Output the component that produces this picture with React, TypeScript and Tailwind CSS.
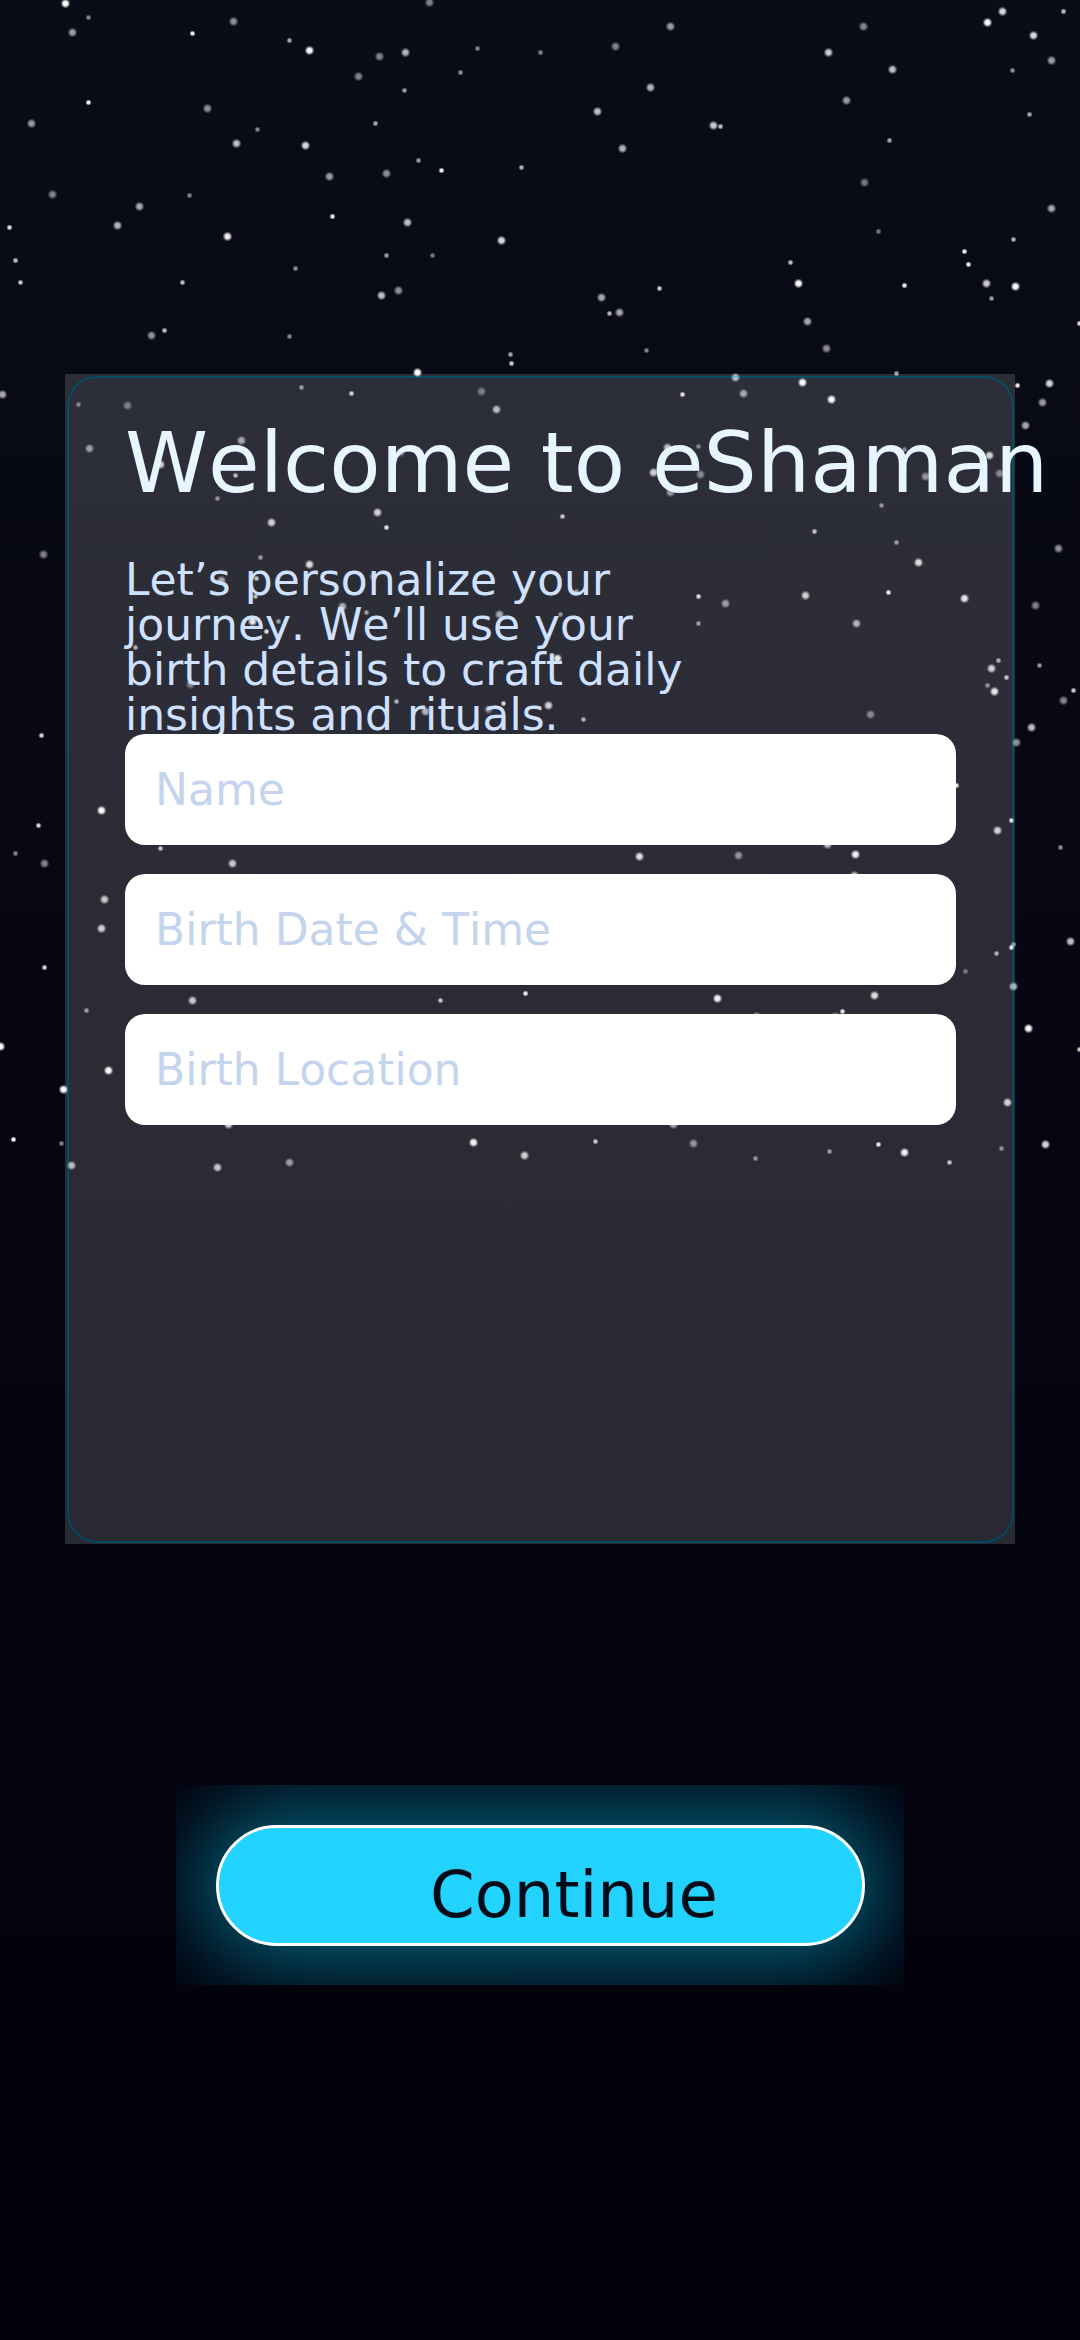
import React from "react";

type Star = [x: number, y: number, opacity: number];

const LARGE_STARS: Star[] = [
  [65, 3, 1], [72, 32, 0.6], [233, 21, 0.55], [309, 50, 1], [429, 2, 0.5], [405, 52, 0.7], [379, 56, 0.5],
  [358, 76, 0.5], [207, 108, 0.55], [31, 123, 0.6], [236, 143, 0.75], [305, 145, 0.85], [329, 176, 0.6],
  [386, 173, 0.55], [52, 194, 0.5], [139, 206, 0.65], [117, 225, 0.7], [227, 236, 0.95], [407, 222, 0.75],
  [501, 240, 0.85], [381, 295, 0.75], [398, 290, 0.55], [151, 335, 0.55], [417, 372, 1],
  [670, 26, 0.6], [615, 46, 0.5], [650, 87, 0.7], [597, 111, 0.75], [713, 125, 0.8], [622, 148, 0.7],
  [863, 26, 0.5], [828, 52, 0.8], [892, 69, 0.75], [846, 100, 0.6], [864, 182, 0.45], [1002, 11, 0.85],
  [987, 22, 1], [1033, 35, 0.85], [1051, 60, 0.6], [1051, 208, 0.65], [986, 283, 0.8], [1015, 286, 1],
  [798, 283, 1], [601, 297, 0.65], [619, 312, 0.65], [807, 321, 0.65], [826, 348, 0.55],
  [2, 394, 0.65], [481, 391, 0.4], [496, 409, 0.7], [127, 405, 0.4], [89, 448, 0.55], [241, 440, 0.6],
  [160, 464, 0.8], [400, 452, 0.4], [377, 512, 0.8], [271, 522, 0.8], [43, 554, 0.5], [309, 564, 0.85],
  [221, 580, 0.6], [373, 576, 0.35], [342, 606, 0.65], [252, 621, 0.9], [499, 614, 0.6], [190, 684, 0.4],
  [425, 711, 0.65], [488, 709, 0.4],
  [735, 377, 0.7], [743, 393, 0.6], [802, 382, 1], [831, 399, 1], [1049, 383, 0.85], [1042, 402, 0.6],
  [1025, 425, 0.65], [667, 447, 0.7], [653, 472, 0.8], [700, 474, 0.45], [670, 492, 0.5], [925, 476, 0.5],
  [989, 455, 0.8], [999, 473, 0.45], [918, 562, 0.85], [1058, 548, 0.55], [805, 595, 0.8], [964, 598, 0.9],
  [1035, 605, 0.5], [725, 603, 0.55], [856, 623, 0.65], [557, 658, 0.9], [548, 705, 0.8], [870, 714, 0.45],
  [991, 668, 0.8], [994, 691, 0.9], [1063, 700, 0.5], [1031, 727, 0.75], [1016, 742, 0.55],
  [101, 810, 1], [44, 863, 0.5], [232, 863, 0.75], [104, 899, 0.75], [101, 928, 0.8], [192, 1000, 0.75],
  [0, 1046, 1], [108, 1070, 1], [63, 1089, 1], [71, 1165, 0.7], [217, 1167, 0.75], [289, 1162, 0.55],
  [228, 1124, 0.8], [473, 1142, 0.95], [524, 1155, 0.8],
  [639, 856, 0.85], [738, 855, 0.5], [827, 844, 0.7], [855, 854, 0.95], [854, 875, 0.7], [997, 830, 0.8],
  [1070, 941, 0.75], [1013, 986, 0.7], [717, 998, 0.95], [874, 995, 0.85], [756, 1016, 0.6], [835, 1016, 0.5],
  [1028, 1028, 1], [1007, 1102, 0.8], [1045, 1144, 0.85], [904, 1152, 0.95], [693, 1143, 0.5], [673, 1124, 0.6],
];

const SMALL_STARS: Star[] = [
  [88, 17, 0.5], [192, 33, 0.95], [289, 40, 0.65], [477, 48, 0.5], [460, 72, 0.55], [404, 90, 0.6],
  [88, 102, 1], [257, 129, 0.5], [375, 123, 0.65], [418, 160, 0.6], [441, 170, 0.95], [521, 167, 0.7],
  [189, 195, 0.5], [9, 227, 0.9], [332, 216, 0.95], [15, 260, 0.75], [20, 282, 0.8], [182, 282, 0.75],
  [295, 268, 0.55], [386, 255, 0.6], [432, 255, 0.45], [164, 330, 0.75], [289, 336, 0.5], [510, 354, 0.65],
  [511, 363, 0.8], [540, 52, 0.5],
  [720, 126, 0.75], [889, 140, 0.65], [1063, 11, 0.75], [1012, 70, 0.55], [1029, 114, 0.65], [878, 231, 0.45],
  [1013, 239, 0.7], [964, 251, 0.95], [968, 264, 0.95], [991, 298, 0.6], [790, 262, 0.75], [904, 285, 0.95],
  [659, 288, 0.8], [609, 313, 0.7], [646, 350, 0.5], [1079, 323, 0.9],
  [301, 387, 0.55], [351, 393, 0.8], [78, 404, 0.45], [235, 475, 0.7], [217, 498, 0.5], [386, 527, 0.9],
  [260, 557, 0.55], [256, 578, 0.75], [255, 596, 0.7], [366, 612, 0.55], [278, 621, 0.55], [266, 631, 0.85],
  [135, 647, 0.65], [433, 682, 0.5], [396, 701, 0.65], [503, 703, 0.85], [41, 735, 0.85],
  [682, 394, 0.9], [896, 373, 0.65], [1017, 385, 0.95], [698, 446, 0.45], [562, 516, 0.75], [904, 449, 0.45],
  [881, 505, 0.5], [814, 531, 0.75], [896, 542, 0.55], [888, 592, 0.95], [698, 596, 0.85], [698, 623, 0.55],
  [576, 591, 0.5], [560, 614, 0.5], [583, 719, 0.65], [998, 660, 0.65], [1006, 677, 0.75], [987, 685, 0.5],
  [1039, 665, 0.6], [1073, 690, 0.8],
  [38, 825, 0.85], [15, 853, 0.5], [160, 848, 0.75], [44, 967, 0.85], [86, 1010, 0.55], [13, 1139, 1],
  [61, 1143, 0.5], [440, 1000, 0.75], [525, 993, 0.95],
  [956, 785, 0.9], [1011, 820, 0.9], [1060, 847, 0.55], [1013, 944, 0.6], [1011, 947, 0.95], [996, 953, 0.65],
  [965, 971, 0.4], [842, 1011, 0.9], [1079, 1049, 0.8], [1001, 1148, 0.5], [949, 1162, 0.75], [878, 1144, 0.9],
  [829, 1151, 0.55], [755, 1158, 0.5], [595, 1141, 0.75],
];

function StarField() {
  return (
    <svg className="absolute inset-0" width="1080" height="2340" viewBox="-0.5 -0.5 1080 2340" aria-hidden="true">
      <defs>
        <radialGradient id="glow">
          <stop offset="0" stopColor="#fff" />
          <stop offset="0.42" stopColor="#fff" stopOpacity="0.95" />
          <stop offset="0.75" stopColor="#fff" stopOpacity="0.35" />
          <stop offset="1" stopColor="#fff" stopOpacity="0" />
        </radialGradient>
      </defs>
      {LARGE_STARS.map(([x, y, o]) => (
        <circle key={`l${x}-${y}`} cx={x} cy={y} r="5.1" fill="url(#glow)" opacity={o} />
      ))}
      {SMALL_STARS.map(([x, y, o]) => (
        <circle key={`s${x}-${y}`} cx={x} cy={y} r="3.2" fill="url(#glow)" opacity={o} />
      ))}
    </svg>
  );
}

function Field({ label }: { label: string }) {
  return (
    <div className="flex h-[111px] w-[831px] items-center rounded-[20px] bg-white pl-[30px] text-[44px] leading-none text-[#c4d4ec]">
      {label}
    </div>
  );
}

export default function App() {
  return (
    <main className="relative h-[2340px] w-[1080px] overflow-hidden bg-[linear-gradient(to_bottom,#0a0c18,#01000b)] font-['DejaVu_Sans',sans-serif] [font-kerning:none]">
      <StarField />
      <div className="relative flex flex-col items-start pt-[374px]">
        <section className="relative ml-[65px] h-[1170px] w-[950px] pt-10 pl-[60px]">
          <div className="absolute inset-0 overflow-hidden">
            <div className="absolute top-[2px] right-[1px] bottom-[1px] left-[2px] rounded-[30px] border-2 border-[rgba(0,211,255,0.34)] bg-white/15 bg-clip-padding shadow-[0_0_0_20px_rgba(255,255,255,0.15)]" />
          </div>
          <div className="relative">
            <h1 className="text-[84px] leading-[98px] whitespace-nowrap text-[#e6f5ff]">Welcome to eShaman</h1>
            <p className="mt-[45px] text-[44px] leading-[45px] whitespace-nowrap text-[#d0e0ff]">
              Let’s personalize your
              <br />
              journey. We’ll use your
              <br />
              birth details to craft daily
              <br />
              insights and rituals.
            </p>
            <form className="relative -mt-[3px] flex flex-col gap-[29px]">
              <Field label="Name" />
              <Field label="Birth Date & Time" />
              <Field label="Birth Location" />
            </form>
          </div>
        </section>

        <div className="mt-[241px] ml-[176px] h-[200px] w-[728px] overflow-hidden pt-10 pl-10">
          <button
            type="button"
            className="flex h-[121px] w-[649px] items-center rounded-full border-[3px] border-white bg-[#22d3ff] pt-[19px] pl-[211px] text-[64px] leading-none text-[#000c18] shadow-[0_0_84px_24px_rgba(0,211,255,0.42)]"
          >
            Continue
          </button>
        </div>
      </div>
    </main>
  );
}
